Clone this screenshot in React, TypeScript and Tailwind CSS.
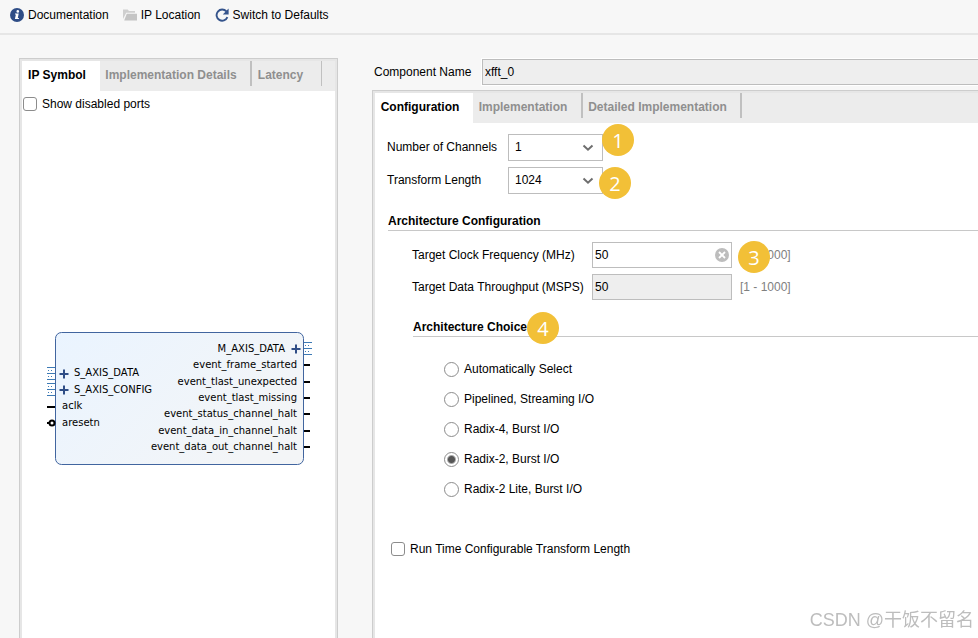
import React, { FC, ReactNode, useState } from "react";

const architectures = [
  "Automatically Select",
  "Pipelined, Streaming I/O",
  "Radix-4, Burst I/O",
  "Radix-2, Burst I/O",
  "Radix-2 Lite, Burst I/O",
];

const outputs = [
  { name: "event_frame_started", y: 33 },
  { name: "event_tlast_unexpected", y: 50 },
  { name: "event_tlast_missing", y: 66 },
  { name: "event_status_channel_halt", y: 82 },
  { name: "event_data_in_channel_halt", y: 99 },
  { name: "event_data_out_channel_halt", y: 115 },
];

const InfoIcon = () => (
  <svg width="14" height="14" viewBox="0 0 14 14">
    <circle cx="7" cy="7" r="7" fill="#2f4d86" />
    <circle cx="7.8" cy="3.4" r="1.3" fill="#fff" />
    <path d="M5 5.4h3.7L7.8 9.9h1.1v1.2H4.9L5.9 6.6H5z" fill="#fff" />
  </svg>
);

const FolderIcon = () => (
  <svg width="14" height="14" viewBox="0 0 14 14">
    <path d="M0 1.5h4.6l1.4 1.6h6v1.7H3.2L0 11z" fill="#cfcfcf" />
    <path d="M3.8 5.8H14v6.7H1.2z" fill="#c4c4c4" />
  </svg>
);

const RefreshIcon = () => (
  <svg width="14" height="14" viewBox="0 0 14 14">
    <path
      d="M11.4 3.4A5.6 5.6 0 1 0 12.4 9.2"
      fill="none"
      stroke="#35548c"
      strokeWidth="1.9"
    />
    <path d="M13.6 0.6V6.4H7.8z" fill="#35548c" />
  </svg>
);

const ToolbarButton: FC<{ icon: ReactNode; label: string }> = ({ icon, label }) => (
  <button type="button" className="flex items-center gap-1">
    {icon}
    {label}
  </button>
);

const Badge: FC<{ n: number; className: string }> = ({ n, className }) => (
  <span
    className={`absolute z-10 flex size-8 items-center justify-center rounded-full bg-[#f2c037] pt-0.5 font-['Open_Sans',sans-serif] text-xl text-white ${className}`}
  >
    {n}
  </span>
);

const Chevron = () => (
  <svg
    className="pointer-events-none absolute top-2.5 right-[9px]"
    width="12"
    height="8"
    viewBox="0 0 12 8"
  >
    <path d="M1.5 1.5L6 5.7L10.5 1.5" fill="none" stroke="#6e6e6e" strokeWidth="2" />
  </svg>
);

// bus connector outside the block
const Bus: FC<{ x: number; y: number }> = ({ x, y }) => (
  <g stroke="#3d7ab5" strokeWidth="1">
    <path d={`M${x} ${y + 0.5}h8M${x} ${y + 6.5}h8M${x} ${y + 12.5}h8`} />
    <path
      d={`M${x + 1} ${y + 3.5}h6M${x + 1} ${y + 9.5}h6`}
      strokeDasharray="1 2"
    />
  </g>
);

const Plus: FC<{ x: number; y: number }> = ({ x, y }) => (
  <path
    d={`M${x - 4.5} ${y}h9M${x} ${y - 4.5}v9`}
    stroke="#2f4d86"
    strokeWidth="2"
  />
);

const IpSymbol = () => (
  <svg
    width="266"
    height="134"
    viewBox="0 0 266 134"
    className="font-['DejaVu_Sans',sans-serif] text-[10px]"
    role="img"
    aria-label="IP symbol"
  >
    <defs>
      <linearGradient id="block" x1="0" y1="0" x2="1" y2="0.5">
        <stop offset="0" stopColor="#eaf4ff" />
        <stop offset="1" stopColor="#f3f5f7" />
      </linearGradient>
    </defs>
    <rect
      x="9.5"
      y="0.5"
      width="248"
      height="132"
      rx="6"
      fill="url(#block)"
      stroke="#41659f"
    />
    <Bus x={1} y={35} />
    <Bus x={1} y={51} />
    <Bus x={258} y={10} />
    <Plus x={18} y={42} />
    <Plus x={18} y={58} />
    <Plus x={250} y={17} />
    <text x="28" y="44">S_AXIS_DATA</text>
    <text x="28" y="61">S_AXIS_CONFIG</text>
    <text x="16" y="77">aclk</text>
    <text x="16" y="94">aresetn</text>
    <text x="239" y="20" textAnchor="end">M_AXIS_DATA</text>
    {outputs.map((port) => (
      <text key={port.name} x="251" y={port.y + 3} textAnchor="end">
        {port.name}
      </text>
    ))}
    <g stroke="#000" strokeWidth="2">
      <path d="M1 75h8M1 91h3" />
      {outputs.map((port) => (
        <path key={port.name} d={`M258 ${port.y}h6`} />
      ))}
      <circle cx="6" cy="91" r="2.5" fill="#fff" />
    </g>
  </svg>
);

const CheckBox: FC<{ label: string }> = ({ label }) => (
  <label className="flex items-center gap-[5px]">
    <input
      type="checkbox"
      className="size-3.5 appearance-none rounded-[3px] border border-[#8c8c8c] bg-white checked:bg-[#555555]"
    />
    {label}
  </label>
);

const App: FC = () => {
  const [architecture, setArchitecture] = useState("Radix-2, Burst I/O");
  const [clock, setClock] = useState("50");

  return (
    <div className="flex min-h-screen flex-col overflow-hidden bg-[#f7f7f7] font-['Liberation_Sans',Arial,sans-serif] text-xs text-black">
      <header className="flex h-[35px] items-center gap-3.5 border-b-2 border-[#e6e6e6] pb-1 pl-2.5">
        <ToolbarButton icon={<InfoIcon />} label="Documentation" />
        <ToolbarButton icon={<FolderIcon />} label="IP Location" />
        <ToolbarButton icon={<RefreshIcon />} label="Switch to Defaults" />
      </header>

      <main className="flex flex-1 gap-[34px] pt-[23px] pl-[19px]">
        <section className="flex w-[319px] shrink-0 flex-col border border-b-0 border-[#cdcdcd] bg-[#e6e6e6] px-0.5 pt-0.5">
          <div role="tablist" className="flex h-[30px] bg-[#ececec] font-bold text-[#8f8f8f]">
            <button role="tab" aria-selected="true" className="w-[78px] bg-white pr-2 pb-0.5 text-black">
              IP Symbol
            </button>
            <button role="tab" className="h-[25px] w-[152px] border-r-2 border-[#c0c0c0] pt-0.5 pr-2">
              Implementation Details
            </button>
            <button role="tab" className="h-[25px] w-[70px] border-r border-[#c0c0c0] pt-0.5 pr-3">
              Latency
            </button>
          </div>
          <div className="flex flex-1 flex-col bg-white pt-[5px] pl-px">
            <CheckBox label="Show disabled ports" />
            <div className="flex flex-1 items-center pt-[47px] pl-[23px]">
              <IpSymbol />
            </div>
          </div>
        </section>

        <div className="flex min-w-0 flex-1 flex-col">
          <div className="flex items-center pt-px pl-0.5">
            <label htmlFor="component" className="w-[108px]">
              Component Name
            </label>
            <input
              id="component"
              readOnly
              defaultValue="xfft_0"
              className="h-[26px] min-w-0 flex-1 border border-r-0 border-[#bdbdbd] bg-[#eeeeee] px-0.5 outline outline-white"
            />
          </div>

          <section className="mt-[5px] flex flex-1 flex-col border-t border-l border-[#cdcdcd] bg-[#e6e6e6] pt-0.5 pl-0.5">
            <div role="tablist" className="flex h-[30px] bg-[#ececec] font-bold text-[#8f8f8f]">
              <button role="tab" aria-selected="true" className="w-[98px] bg-white pr-2 pb-0.5 text-black">
                Configuration
              </button>
              <button role="tab" className="h-[25px] w-[110px] border-r-2 border-[#c0c0c0] pt-0.5 pr-2">
                Implementation
              </button>
              <button role="tab" className="h-[25px] w-[159px] border-r-2 border-[#c0c0c0] pt-0.5 pr-2">
                Detailed Implementation
              </button>
            </div>

            <div className="flex-1 bg-white pt-[11px] pl-3">
              <div className="flex flex-col gap-1.5">
                <div className="flex items-center">
                  <label htmlFor="channels" className="w-[121px] pb-0.5">
                    Number of Channels
                  </label>
                  <div className="relative">
                    <select
                      id="channels"
                      className="block h-[27px] w-[95px] appearance-none border border-[#bdbdbd] bg-white pb-0.5 pl-1.5"
                    >
                      <option>1</option>
                    </select>
                    <Chevron />
                    <Badge n={1} className="-top-2.5 left-[94px]" />
                  </div>
                </div>
                <div className="flex items-center">
                  <label htmlFor="length" className="w-[121px] pb-0.5">
                    Transform Length
                  </label>
                  <div className="relative">
                    <select
                      id="length"
                      className="block h-[27px] w-[95px] appearance-none border border-[#bdbdbd] bg-white pb-0.5 pl-1.5"
                    >
                      <option>1024</option>
                    </select>
                    <Chevron />
                    <Badge n={2} className="top-0 left-[91px]" />
                  </div>
                </div>
              </div>

              <div className="pl-px">
                <h2 className="mt-[18px] border-b border-[#c8c8c8] font-bold leading-[18px]">
                  Architecture Configuration
                </h2>
                <div className="pt-[11px] pl-6">
                  <div className="flex flex-col gap-1.5">
                    <div className="flex items-center">
                      <label htmlFor="clock" className="w-[180px]">
                        Target Clock Frequency (MHz)
                      </label>
                      <div className="relative">
                        <input
                          id="clock"
                          value={clock}
                          onChange={(e) => setClock(e.target.value)}
                          className="block h-[26px] w-[140px] border border-[#bdbdbd] bg-white pl-0.5"
                        />
                        <button
                          type="button"
                          aria-label="Clear"
                          onClick={() => setClock("")}
                          className="absolute top-1.5 right-[3px]"
                        >
                          <svg width="14" height="14" viewBox="0 0 14 14">
                            <circle cx="7" cy="7" r="7" fill="#bdbdbd" />
                            <path
                              d="M4 4l6 6M10 4l-6 6"
                              stroke="#fff"
                              strokeWidth="1.8"
                            />
                          </svg>
                        </button>
                        <Badge n={3} className="-top-px left-[146px]" />
                      </div>
                      <span className="pl-2 text-[#808080]">[1 - 1000]</span>
                    </div>
                    <div className="flex items-center">
                      <label htmlFor="throughput" className="w-[180px]">
                        Target Data Throughput (MSPS)
                      </label>
                      <input
                        id="throughput"
                        readOnly
                        defaultValue="50"
                        className="h-[26px] w-[140px] border border-[#bdbdbd] bg-[#eeeeee] pl-0.5"
                      />
                      <span className="pl-2 text-[#808080]">[1 - 1000]</span>
                    </div>
                  </div>

                  <div className="relative mt-[18px] pl-px">
                    <h3 className="border-b border-[#c8c8c8] font-bold leading-[18px]">
                      Architecture Choice
                    </h3>
                    <Badge n={4} className="-top-1.5 left-[115px]" />
                  </div>
                  <div role="radiogroup" aria-label="Architecture Choice" className="pt-[17px] pl-8">
                    {architectures.map((name) => (
                      <label key={name} className="flex h-[30px] items-center gap-[5px]">
                        <input
                          type="radio"
                          name="architecture"
                          checked={architecture === name}
                          onChange={() => setArchitecture(name)}
                          className="size-[15px] appearance-none rounded-full border border-[#8c8c8c] bg-white checked:bg-[radial-gradient(circle,#555555_3px,#ffffff_5px)]"
                        />
                        {name}
                      </label>
                    ))}
                  </div>
                </div>
              </div>

              <div className="pt-[37px] pl-1">
                <CheckBox label="Run Time Configurable Transform Length" />
              </div>
            </div>
          </section>
        </div>
      </main>

      <p className="fixed right-1 bottom-1 font-['Liberation_Sans','Noto_Sans_CJK_SC',sans-serif] text-lg leading-7 text-[#bdbdbd]">
        CSDN @干饭不留名
      </p>
    </div>
  );
};

export default App;
